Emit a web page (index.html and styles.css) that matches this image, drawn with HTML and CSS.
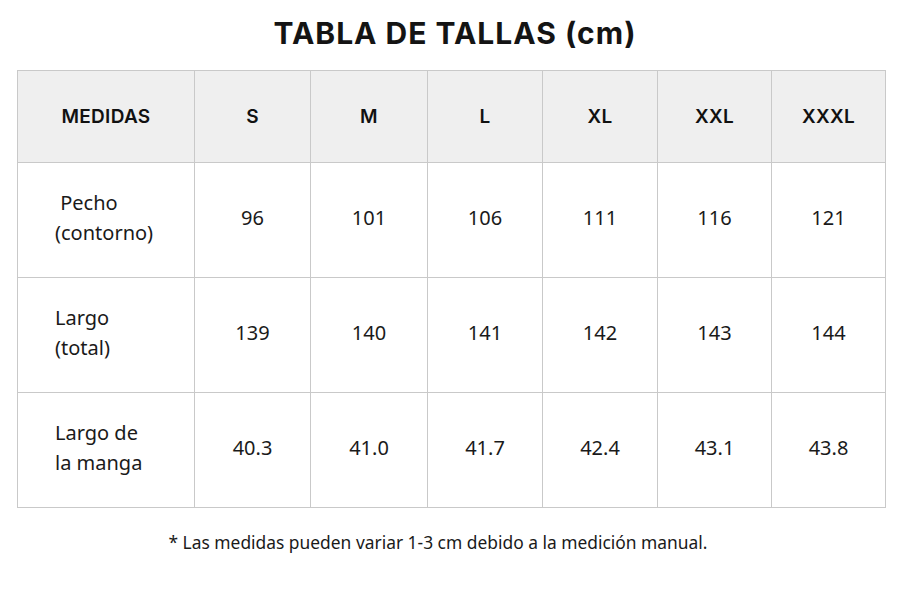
FILE: index.html
```html
<!DOCTYPE html>
<html lang="es">
<head>
<meta charset="utf-8">
<link rel="stylesheet" href="styles.css">
</head>
<body>
<div class="page">
  <h1 class="title">TABLA DE TALLAS (cm)</h1>
  <table class="sizes">
    <colgroup>
      <col class="c-label"><col class="c1"><col class="c2"><col class="c3"><col class="c4"><col class="c5"><col class="c6">
    </colgroup>
    <thead>
      <tr>
        <th>MEDIDAS</th><th>S</th><th>M</th><th>L</th><th>XL</th><th>XXL</th><th>XXXL</th>
      </tr>
    </thead>
    <tbody>
      <tr>
        <td class="label">&nbsp;Pecho<br>(contorno)</td><td>96</td><td>101</td><td>106</td><td>111</td><td>116</td><td>121</td>
      </tr>
      <tr>
        <td class="label">Largo<br>(total)</td><td>139</td><td>140</td><td>141</td><td>142</td><td>143</td><td>144</td>
      </tr>
      <tr>
        <td class="label">Largo de<br>la manga</td><td>40.3</td><td>41.0</td><td>41.7</td><td>42.4</td><td>43.1</td><td>43.8</td>
      </tr>
    </tbody>
  </table>
  <p class="note">* Las medidas pueden variar 1-3 cm debido a la medición manual.</p>
</div>
</body>
</html>
```

FILE: styles.css
```css
html, body {
  margin: 0;
  padding: 0;
  background: #ffffff;
}
body {
  font-family: "Noto Sans", "Open Sans", sans-serif;
  color: #111111;
}
.page {
  width: 900px;
  padding-top: 13px;
  display: flex;
  flex-direction: column;
  align-items: center;
}
.title {
  margin: 0 0 17px 0;
  font-family: Inter, "Noto Sans", sans-serif;
  font-size: 30px;
  line-height: 40px;
  font-weight: 700;
  letter-spacing: 1px;
  text-align: center;
  padding-left: 10px;
  color: #141414;
}
.sizes {
  width: 868px;
  margin-left: 3px;
  border-collapse: collapse;
  table-layout: fixed;
}
.c-label { width: 177px; }
.c1 { width: 116px; }
.c2 { width: 117px; }
.c3 { width: 115px; }
.c4 { width: 115px; }
.c5 { width: 114px; }
.c6 { width: 114px; }
.sizes th,
.sizes td {
  border: 1px solid #c9c9c9;
  text-align: center;
  padding: 0;
}
.sizes th {
  height: 91px;
  background: #efefef;
  font-family: Inter, "Noto Sans", sans-serif;
  font-size: 19px;
  font-weight: 600;
  letter-spacing: 0.3px;
  color: #111111;
}
.sizes td {
  height: 110px;
  font-size: 20px;
  line-height: 30px;
  color: #1a1a1a;
  padding-bottom: 4px;
}
.sizes td.label {
  text-align: left;
  padding-left: 37px;
}
.note {
  margin: 22px 0 0 0;
  font-size: 17.4px;
  line-height: 24px;
  color: #1a1a1a;
  text-align: center;
  margin-right: 24px;
}
```
